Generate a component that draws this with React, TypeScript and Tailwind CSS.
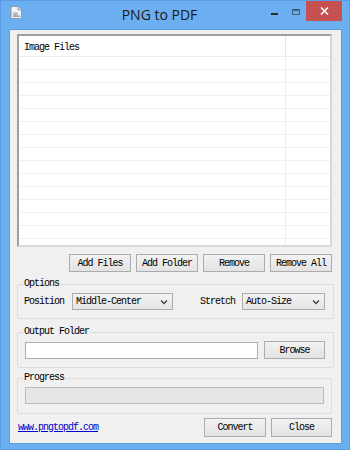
import React from 'react';

const btn =
  'h-[18px] flex items-center justify-center border border-[#acacac] bg-gradient-to-b from-[#f2f2f2] to-[#e3e3e3] text-black';

function Select({ value, width }: { value: string; width: string }) {
  return (
    <div className={`${width} h-[17px] flex items-center border border-[#acacac] bg-gradient-to-b from-[#f2f2f2] to-[#e5e5e5] pl-[3px] pr-[4px]`}>
      <span className="flex-1">{value}</span>
      <svg width="8" height="6" viewBox="0 0 8 6">
        <path d="M1 1.5 L4 4.5 L7 1.5" fill="none" stroke="#404040" strokeWidth="1.3" />
      </svg>
    </div>
  );
}

function Group({ label, children, className }: { label: string; children: React.ReactNode; className?: string }) {
  return (
    <fieldset className={`border border-[#dcdcdc] rounded-[2px] pl-[7px] ${className ?? ''}`}>
      <legend className="-ml-[2px] px-[1px] leading-[12px]">{label}</legend>
      {children}
    </fieldset>
  );
}

export default function App() {
  const rows = Array.from({ length: 15 });

  return (
    <div className="w-[350px] h-[450px] bg-[#6caff0] flex flex-col pl-[8px] pr-[7px] pb-[6px] border border-[#5a9de6] overflow-hidden">
      {/* title bar */}
      <div className="h-[29px] flex items-start relative">
        <svg className="mt-[5px] ml-[1px]" width="12" height="13" viewBox="0 0 12 13">
          <path d="M1 0.5 H8 L11.5 4 V12.5 H1 Z" fill="#f4f4f4" stroke="#8a9bb0" />
          <path d="M8 0.5 V4 H11.5" fill="#dfe5ec" stroke="#8a9bb0" />
          <ellipse cx="5.5" cy="8" rx="3" ry="2" fill="#b9c4cf" />
          <path d="M2.5 11 L5 8 L7 10 L9 9 L10.5 11 Z" fill="#9aa6b3" />
        </svg>
        <div className="flex-1 text-center font-['Open_Sans',sans-serif] text-[14px] leading-[28px] text-[#1a1a1a] pl-[26px]">
          PNG to PDF
        </div>
        <div className="w-[7px] h-[2px] bg-[#2b2b2b] mt-[12px] mr-[14px]" />
        <div className="w-[8px] h-[6px] border border-[#46607e] border-t-2 mt-[8px] mr-[6px]" />
        <div className="w-[36px] h-[20px] bg-[#c75050] flex items-center justify-center">
          <svg width="9" height="8" viewBox="0 0 9 8">
            <path d="M1 0.5 L8 7.5 M8 0.5 L1 7.5" stroke="#ffffff" strokeWidth="1.6" />
          </svg>
        </div>
      </div>

      {/* client area */}
      <div className="flex-1 bg-[#f0f0f0] border border-[#5f9be0] flex flex-col pl-[7px] pr-[9px] pt-[4px] pb-[6px] font-['Liberation_Mono',monospace] text-[10px] tracking-[-1px] text-black">
        {/* list */}
        <div className="h-[213px] border-2 border-t-[#a0a0a0] border-l-[#a0a0a0] border-r-[#d8d8d8] border-b-[#d8d8d8] bg-white flex flex-col overflow-hidden">
          <div className="h-[21px] flex border-b border-[#ececec] shrink-0">
            <div className="w-[267px] pl-[5px] pt-[3px] leading-[18px] border-r border-[#e5e5e5]">Image Files</div>
            <div className="flex-1" />
          </div>
          {rows.map((_, i) => (
            <div key={i} className="h-[13px] flex border-b border-[#f0f0f0] shrink-0">
              <div className="w-[267px] border-r border-[#ececec]" />
              <div className="flex-1" />
            </div>
          ))}
        </div>

        {/* list buttons */}
        <div className="flex justify-end gap-[5px] mt-[7px]">
          <div className={`${btn} w-[62px]`}>Add Files</div>
          <div className={`${btn} w-[62px]`}>Add Folder</div>
          <div className={`${btn} w-[62px]`}>Remove</div>
          <div className={`${btn} w-[62px]`}>Remove All</div>
        </div>

        {/* options */}
        <Group label="Options" className="mt-[6px] pr-[8px] pt-[3px] pb-[8px]">
          <div className="flex items-center -ml-[1px]">
            <span className="w-[48px]">Position</span>
            <Select value="Middle-Center" width="w-[101px]" />
            <span className="ml-[27px] w-[42px]">Stretch</span>
            <Select value="Auto-Size" width="w-[83px]" />
          </div>
        </Group>

        {/* output folder */}
        <Group label="Output Folder" className="mt-[7px] pr-[8px] pt-[3px] pb-[8px]">
          <div className="flex items-center gap-[6px]">
            <div className="w-[233px] h-[17px] bg-white border border-[#abadb3]" />
            <div className={`${btn} w-[61px] h-[17px]`}>Browse</div>
          </div>
        </Group>

        {/* progress */}
        <Group label="Progress" className="mt-[4px] pr-[7px] pt-[3px] pb-[9px]">
          <div className="h-[17px] bg-[#e6e6e6] border border-[#bcbcbc]" />
        </Group>

        {/* bottom */}
        <div className="flex items-center mt-[4px]">
          <a href="#" className="text-[#0000cc] underline ml-[1px] flex-1">www.pngtopdf.com</a>
          <div className={`${btn} w-[62px] h-[19px]`}>Convert</div>
          <div className={`${btn} w-[61px] h-[19px] ml-[5px]`}>Close</div>
        </div>
      </div>
    </div>
  );
}
